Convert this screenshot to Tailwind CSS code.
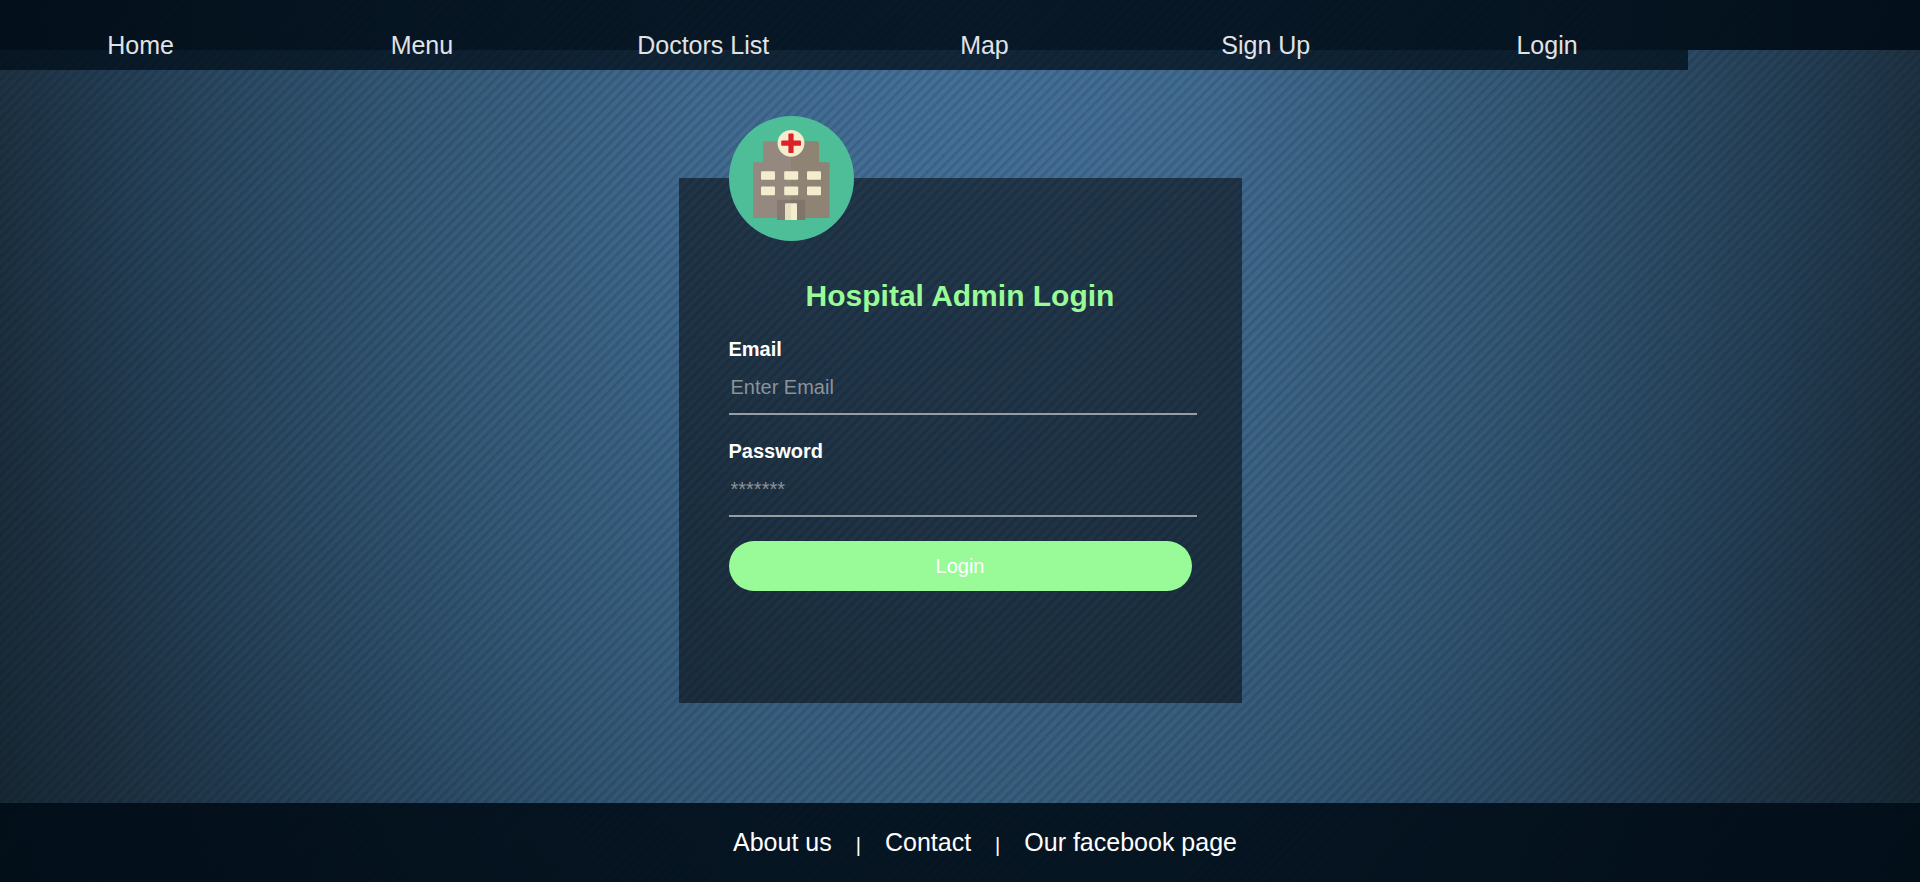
<!DOCTYPE html>
<html lang="en">
<head>
<meta charset="utf-8">
<meta name="viewport" content="width=device-width, initial-scale=1">
<title>Hospital Admin Login</title>
<script src="https://cdn.jsdelivr.net/npm/@tailwindcss/browser@4"></script>
</head>
<body class="font-['Liberation_Sans',Arial,sans-serif] text-white">
<div class="flex min-h-screen flex-col bg-[repeating-linear-gradient(135deg,rgba(0,10,25,0.18)_0px,rgba(0,10,25,0.14)_1px,rgba(0,10,25,0.03)_3px,rgba(0,10,25,0.03)_5px,rgba(0,10,25,0.18)_7px),radial-gradient(ellipse_56%_200%_at_50%_0%,#47759e_0%,#436e94_25%,#365c7a_52%,#28455d_74%,#1e3242_90%,#182935_100%)]">

  <header class="h-[50px] bg-[#000c16]/87">
    <nav class="h-[70px] w-[87.9%] bg-[linear-gradient(transparent_50px,rgba(0,13,24,0.75)_50px)]" aria-label="Main">
      <ul class="grid h-full grid-cols-6 items-center pt-5 text-center text-[25px] leading-[50px] text-[#e0e2e5]">
        <li><a href="#">Home</a></li>
        <li><a href="#">Menu</a></li>
        <li><a href="#">Doctors List</a></li>
        <li><a href="#">Map</a></li>
        <li><a href="#">Sign Up</a></li>
        <li><a href="#">Login</a></li>
      </ul>
    </nav>
  </header>

  <main class="flex flex-1 items-start justify-center pt-32">
    <section class="relative min-h-[525px] w-[563px] bg-black/50 px-[50px] pt-24">
      <svg class="absolute -top-[62px] left-[50px] size-[125px]" viewBox="0 0 125 125" role="img" aria-label="Hospital">
        <circle cx="62.5" cy="62.5" r="62.5" fill="#4dbe98"/>
        <path d="M62.5 25.3H36a1.7 1.7 0 0 0-1.7 1.7v19.3H25.5a1.5 1.5 0 0 0-1.5 1.5v52.7a1.5 1.5 0 0 0 1.5 1.5h37z" fill="#95897f"/>
        <path d="M62 25.3h26.3a1.7 1.7 0 0 1 1.7 1.7v19.3h9.2a1.5 1.5 0 0 1 1.5 1.5v52.7a1.5 1.5 0 0 1-1.5 1.5H62z" fill="#8f8374"/>
        <path d="M62 83.7H49.5a1.5 1.5 0 0 0-1.5 1.5V104h14z" fill="#857a71"/>
        <path d="M62 83.7h12.8a1.5 1.5 0 0 1 1.5 1.5V104H62z" fill="#80756a"/>
        <path d="M62 87.3h-5a1 1 0 0 0-1 1V104h6z" fill="#e5dfbf"/>
        <path d="M62 87.3h5a1 1 0 0 1 1 1V104h-6z" fill="#f3edcd"/>
        <g fill="#f3edcd">
          <circle cx="62" cy="27.3" r="13.4"/>
          <rect x="32" y="55.2" width="14" height="8.6" rx="1"/>
          <rect x="55.2" y="55.2" width="14" height="8.6" rx="1"/>
          <rect x="78" y="55.2" width="14" height="8.6" rx="1"/>
          <rect x="32" y="70.6" width="14" height="8.6" rx="1"/>
          <rect x="55.2" y="70.6" width="14" height="8.6" rx="1"/>
          <rect x="78" y="70.6" width="14" height="8.6" rx="1"/>
        </g>
        <g fill="#dc2228">
          <rect x="59.4" y="17.4" width="5.2" height="19.6" rx="1"/>
          <rect x="52.2" y="24.6" width="19.8" height="5.2" rx="1"/>
        </g>
      </svg>

      <h1 class="py-[5px] text-center text-[30px] leading-[34px] font-bold text-[#98fb98]">Hospital Admin Login</h1>

      <form class="pt-5" action="#" onsubmit="return false">
        <label for="email" class="block text-[20px] leading-[23px] font-bold">Email</label>
        <input id="email" type="email" placeholder="Enter Email" class="mb-[25px] block h-[54px] w-[468px] max-w-none border-b-2 border-[#969da3] bg-transparent px-[2px] text-[20px] outline-none placeholder:text-[#8b9399]">
        <label for="password" class="block text-[20px] leading-[23px] font-bold">Password</label>
        <input id="password" type="password" placeholder="*******" class="mb-6 block h-[54px] w-[468px] max-w-none border-b-2 border-[#969da3] bg-transparent px-[2px] text-[20px] outline-none placeholder:text-[#8b9399]">
        <button type="submit" class="block h-[50px] w-full rounded-full bg-[#98fb98] text-[20px]">Login</button>
      </form>
    </section>
  </main>

  <footer class="flex h-[79px] items-center justify-center bg-[#000c16]/87 pl-[50px]">
    <nav class="flex items-center gap-6 text-[25px]" aria-label="Footer">
      <a href="#">About us</a>
      <span class="pt-1 text-[20px]">|</span>
      <a href="#">Contact</a>
      <span class="pt-1 text-[20px]">|</span>
      <a href="#">Our facebook page</a>
    </nav>
  </footer>
</div>
</body>
</html>
